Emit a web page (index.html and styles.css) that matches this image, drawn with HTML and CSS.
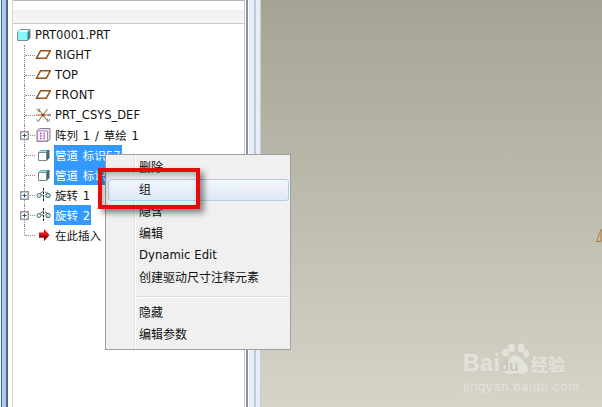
FILE: index.html
```html
<!DOCTYPE html>
<html lang="zh">
<head>
<meta charset="utf-8">
<title>PRT0001.PRT</title>
<link rel="stylesheet" href="styles.css">
</head>
<body>
<svg class="defs" width="0" height="0" aria-hidden="true">
  <symbol id="plane" viewBox="0 0 16 16"><path d="M5.500 3.800H15.300L11.300 11.200H1.500Z" fill="none" stroke="#8f5220" stroke-width="1.500"/></symbol>
  <symbol id="solid" viewBox="0 0 16 16"><path d="M6 3H14.500V11L12 13.500V5.500H3.500Z" fill="#3f6a70"/><path d="M3.500 5.500L6 3.500H12.500L11 5.500Z" fill="#8ff0f0"/><path d="M3.500 5.500H11.500V13.500H3.500Z" fill="#fff" stroke="#7a8486"/></symbol>
  <symbol id="revolve" viewBox="0 0 16 16"><path d="M8.500 1V15" stroke="#111" stroke-dasharray="2.500 1"/><path d="M5 6.500L8 4.500M10 5L13 6.500M6 8H8" stroke="#666" fill="none"/><circle cx="4" cy="8.500" r="2" fill="#c8f6f6" stroke="#5c7070"/><circle cx="13" cy="8.500" r="2.200" fill="#a8ecec" stroke="#4c6060"/></symbol>
  <symbol id="plus" viewBox="0 0 9 9"><path d="M.750.750H8.250V8.250H.750Z" fill="#fff" stroke="#9a9a9a" stroke-width="1.500"/><path d="M2.500 4.500H6.500M4.500 2.500V6.500" stroke="#24489c"/></symbol>
</svg>

<div class="app">
  <div class="edge"></div>
  <aside class="panel">
    <div class="panel-top"></div>
    <div class="tree">
      <div class="root">
        <svg class="cube" viewBox="0 0 14 12"><path d="M.500 3L3 .500H13V9L10.500 11.500H.500Z" fill="#88f6f6" stroke="#7b8f90"/><path d="M1 3L3.300 1H12L10 3Z" fill="#d8fbfb"/><path d="M10.500 3L13 1V9L10.500 11.500Z" fill="#4f7b80"/></svg>
        <span class="label">PRT0001.PRT</span>
      </div>
      <div class="row"><span class="lead"></span><svg class="icon"><use href="#plane"/></svg><span class="label">RIGHT</span></div>
      <div class="row"><span class="lead"></span><svg class="icon"><use href="#plane"/></svg><span class="label">TOP</span></div>
      <div class="row"><span class="lead"></span><svg class="icon"><use href="#plane"/></svg><span class="label">FRONT</span></div>
      <div class="row"><span class="lead"></span>
        <svg class="icon" viewBox="0 0 16 16"><path d="M1 8H15M3.500 2L12.500 14M12.500 2L3.500 14" stroke="#9a5a2a" fill="none"/><path d="M1 1.500L5 5M3 5L5 1.500M12 12L15 15M12 15L15 12M1 12.500L4 15M13 7L16 9M13 9L16 7" stroke="#8a8a8a" fill="none"/><circle cx="8" cy="8" r="1.600" fill="#8f4f20"/></svg>
        <span class="label">PRT_CSYS_DEF</span></div>
      <div class="row"><span class="lead"><svg class="plus"><use href="#plus"/></svg></span>
        <svg class="icon" viewBox="0 0 16 16"><path d="M2 3.500L4.500 1.500H15V12L13 14.500H2Z" fill="#e8dcec" stroke="#8a8096"/><path d="M2.500 4H12.500V14H2.500Z" fill="#fbf6fc" stroke="#a095aa"/><path d="M5 6.500H6.500M8.500 6.500H10M5 9H6.500M8.500 9H10M5 11.500H6.500M8.500 11.500H10" stroke="#c03ce0" stroke-width="1.300"/></svg>
        <span class="label">阵列 1 / 草绘 1</span></div>
      <div class="row"><span class="lead"></span><svg class="icon"><use href="#solid"/></svg><span class="label selected">管道 标识57</span></div>
      <div class="row"><span class="lead"></span><svg class="icon"><use href="#solid"/></svg><span class="label selected">管道 标识58</span></div>
      <div class="row"><span class="lead"><svg class="plus"><use href="#plus"/></svg></span><svg class="icon"><use href="#revolve"/></svg><span class="label">旋转 1</span></div>
      <div class="row"><span class="lead"><svg class="plus"><use href="#plus"/></svg></span><svg class="icon"><use href="#revolve"/></svg><span class="label selected">旋转 2</span></div>
      <div class="row last"><span class="lead"></span>
        <svg class="icon" viewBox="0 0 16 16"><path d="M4 5.500H9V2L14.500 8L9 14V10.500H4Z" fill="#f00c14"/><path d="M4 8.500H14L9 14V10.500H4Z" fill="#8c0c12"/></svg>
        <span class="label">在此插入</span></div>
    </div>
  </aside>
  <div class="sash"></div>
  <main class="canvas">
    <svg class="datum" viewBox="0 0 6 13"><path d="M5 .500V12.500H.500Z" fill="none" stroke="#b07a30"/></svg>
    <div class="mark">
      <div class="mark-top">
        <span class="bai">Bai</span>
        <svg class="paw" viewBox="0 0 34 34"><ellipse cx="8" cy="10" rx="3.500" ry="4" fill="#e8e7e0"/><ellipse cx="14" cy="5" rx="3.500" ry="4.500" fill="#e8e7e0"/><ellipse cx="24" cy="5" rx="3.500" ry="4.500" fill="#e8e7e0"/><ellipse cx="29" cy="11" rx="3" ry="4" fill="#e8e7e0"/><path d="M17 13C12 13 11 18 7 22C3 27 7 33 13 32C17 31 20 31 24 32C30 33 33 27 29 22C25 18 23 13 17 13Z" fill="#e8e7e0"/></svg>
        <span class="du">du</span>
        <span class="jy">经验</span>
      </div>
      <div class="mark-url">jingyan.baidu.com</div>
    </div>
  </main>
</div>

<div class="menu">
  <div class="item">删除</div>
  <div class="item hot">组</div>
  <div class="item">隐含</div>
  <div class="item">编辑</div>
  <div class="item latin">Dynamic Edit</div>
  <div class="item">创建驱动尺寸注释元素</div>
  <div class="sep"></div>
  <div class="item">隐藏</div>
  <div class="item">编辑参数</div>
</div>
<div class="callout"></div>
</body>
</html>
```
FILE: styles.css
```css
* { box-sizing: border-box; }
html, body { margin: 0; height: 407px; overflow: hidden; }
body {
  position: relative;
  font-family: "DejaVu Sans", "Noto Sans CJK SC", sans-serif;
  font-size: 11.5px;
  color: #111;
}
.defs { position: absolute; }
.app { display: flex; height: 407px; }
.edge {
  width: 13px;
  background: linear-gradient(90deg, #f0f4fa 0 1px, #47699a 1px 2px, #a9cbf2 2px 6px, #5a6470 6px 8px, #fff 8px 12px, #d4d4dc 12px 13px);
}
.panel { width: 231px; background: #fff; }
.panel-top {
  height: 24px;
  padding-top: 9px;
  border-top: 1px solid #b8b8b8;
  border-bottom: 1px solid #c8c8c8;
}
.panel-top::before {
  content: "";
  display: block;
  height: 13px;
  background: linear-gradient(#f0f0f0, #f6f6f6);
}
.tree { padding-top: 1px; }
.root { display: flex; align-items: center; height: 20px; padding-left: 4px; }
.cube { width: 14px; height: 12px; margin-right: 4px; }
.row {
  position: relative;
  display: flex;
  align-items: center;
  height: 20px;
  padding-left: 7px;
}
.row::before {
  content: "";
  position: absolute;
  left: 11px;
  top: 0;
  bottom: 0;
  border-left: 1px dotted #8c8c8c;
}
.row.last::before { bottom: 10px; }
.lead {
  position: relative;
  display: flex;
  align-items: center;
  width: 15px;
  height: 100%;
  flex: none;
}
.lead::after {
  content: "";
  position: absolute;
  left: 5px;
  right: 0;
  top: 10px;
  border-top: 1px dotted #8c8c8c;
}
.plus { position: relative; z-index: 1; width: 9px; height: 9px; }
.icon { width: 16px; height: 16px; flex: none; }
.label { display: flex; align-items: center; height: 100%; white-space: pre; word-spacing: 1.2px; }
.row .label { margin-left: 3px; padding: 0 1px; }
.selected { background: #3399ff; color: #fff; }
.sash {
  width: 17px;
  background: linear-gradient(90deg, #c8c8d0 0 1px, #fff 1px 2px, #8e8e9e 2px 4px, #fff 4px 5px, #e8eef3 5px 10px, #b6ccdf 10px 12px, #e8eef3 12px 16px, #bcd0e4 16px 17px);
}
.canvas {
  position: relative;
  flex: 1;
  background: linear-gradient(#a5a393, #d6d4c8);
}
.datum { position: absolute; right: 0; top: 229px; width: 6px; height: 13px; }
.mark {
  position: absolute;
  left: 202px;
  top: 343px;
  width: 110px;
  color: #e8e7e0;
  opacity: .8;
  font-family: "Liberation Sans", "Noto Sans CJK SC", sans-serif;
}
.mark-top { position: relative; display: flex; align-items: flex-end; height: 33px; }
.bai { font-size: 23px; font-weight: 700; line-height: 26px; width: 35px; letter-spacing: .5px; }
.paw { width: 33px; height: 33px; flex: none; }
.du {
  position: absolute;
  left: 37px;
  bottom: 0;
  color: #c6c4b8;
  font-size: 15px;
  font-weight: 700;
  line-height: 20px;
}
.jy { font-size: 17px; line-height: 20px; white-space: nowrap; font-weight: 700; }
.mark-url { margin-top: 3px; font-size: 13px; letter-spacing: .7px; line-height: 16px; white-space: nowrap; }
.menu {
  position: absolute;
  left: 105px;
  top: 154px;
  width: 186px;
  height: 196px;
  padding: 2px 1px 2px 2px;
  background: #f0f0f0;
  border: 1px solid #a0a0a0;
  font-size: 12px;
}
.menu::before {
  content: "";
  position: absolute;
  left: 28px;
  top: 1px;
  bottom: 1px;
  border-left: 1px solid #e2e2e2;
  border-right: 1px solid #fff;
}
.item {
  position: relative;
  display: flex;
  align-items: center;
  height: 22px;
  padding: 0 0 3px 30px;
  border: 1px solid transparent;
  border-radius: 3px;
  white-space: nowrap;
}
.latin { font-size: 11.7px; }
.hot {
  border-color: #aeccec;
  background: linear-gradient(#f3f6fb, #dfe8f5);
}
.sep { height: 13px; padding-top: 7px; margin: 0 1px 0 29px; }
.sep::before { content: ""; display: block; border-top: 1px solid #dcdcdc; border-bottom: 1px solid #fff; }
.callout {
  position: absolute;
  left: 98px;
  top: 168px;
  width: 102px;
  height: 41px;
  border: 4px solid #e60a0a;
  box-shadow: 4px 4px 6px rgba(0, 0, 0, .45), inset 3px 3px 6px rgba(0, 0, 0, .3);
}
```
